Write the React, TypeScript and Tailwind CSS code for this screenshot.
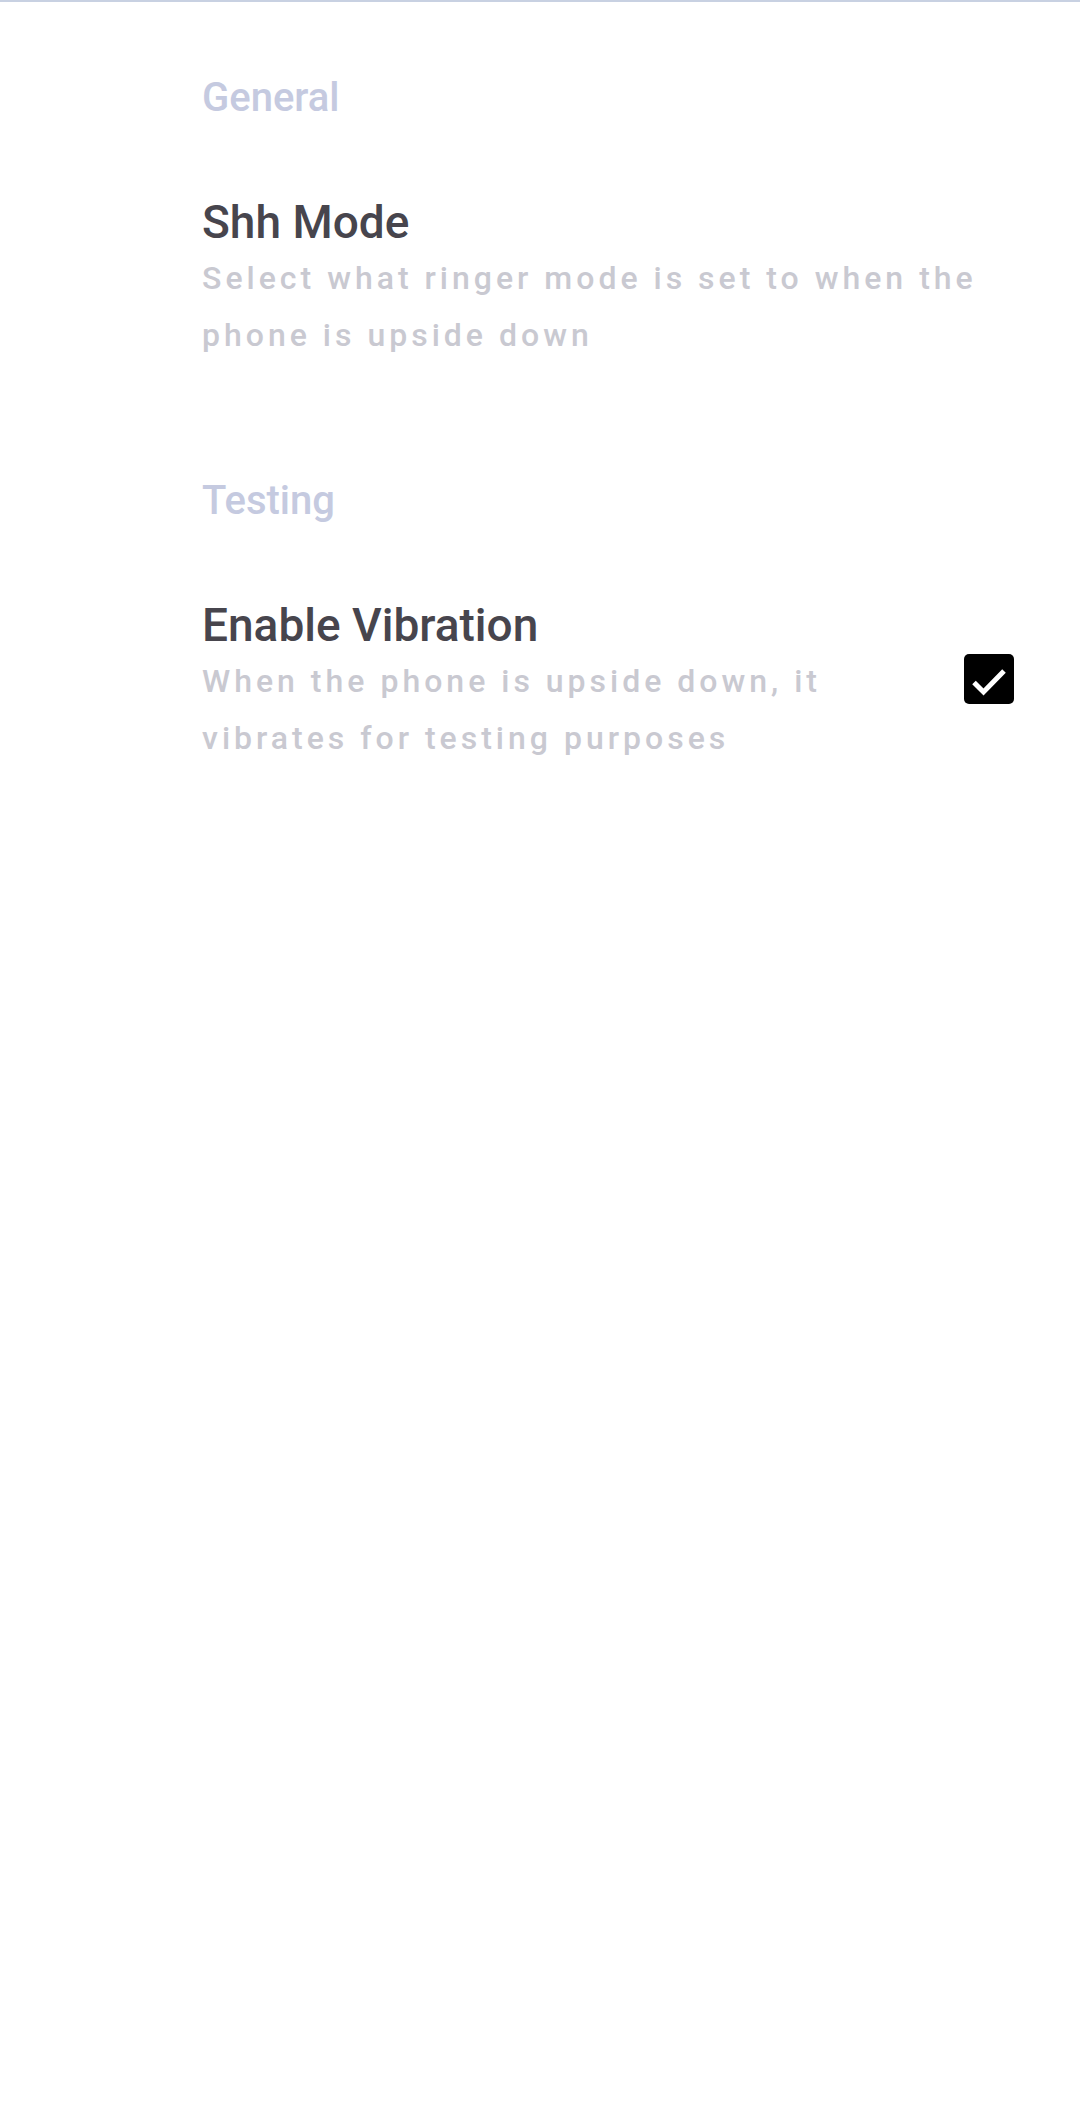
import React from "react";

function Category({ label, className = "" }: { label: string; className?: string }) {
  return (
    <div
      className={`pl-[202px] text-[40px] leading-[50px] font-medium text-[#c5cae0] ${className}`}
    >
      {label}
    </div>
  );
}

function PrefText({ title, summary }: { title: string; summary: string }) {
  return (
    <div className="flex-1 min-w-0">
      <div className="text-[46px] leading-[52px] font-medium text-[#47454d]">{title}</div>
      <div className="mt-[2px] text-[32px] leading-[57px] tracking-[4px] font-medium text-[#c9c9d1]">
        {summary}
      </div>
    </div>
  );
}

function CheckBox() {
  return (
    <div className="w-[50px] h-[50px] rounded-[5px] bg-black flex items-center justify-center shrink-0">
      <svg width="50" height="50" viewBox="0 0 50 50">
        <polyline
          points="10,28.5 19.5,38 40,17"
          fill="none"
          stroke="white"
          strokeWidth="5"
          strokeLinejoin="miter"
        />
      </svg>
    </div>
  );
}

export default function App() {
  return (
    <div className="w-[1080px] h-[2122px] bg-white font-['Roboto',sans-serif] antialiased">
      <div className="h-[2px] bg-[#c8d1e2]" />
      <Category label="General" className="mt-[71px]" />
      <div className="flex pl-[202px] pr-[66px] mt-[73px]">
        <PrefText
          title="Shh Mode"
          summary="Select what ringer mode is set to when the phone is upside down"
        />
      </div>
      <Category label="Testing" className="mt-[112px]" />
      <div className="flex items-center pl-[202px] pr-[66px] mt-[73px]">
        <PrefText
          title="Enable Vibration"
          summary="When the phone is upside down, it vibrates for testing purposes"
        />
        <div className="ml-[44px] mb-[8px]">
          <CheckBox />
        </div>
      </div>
    </div>
  );
}
